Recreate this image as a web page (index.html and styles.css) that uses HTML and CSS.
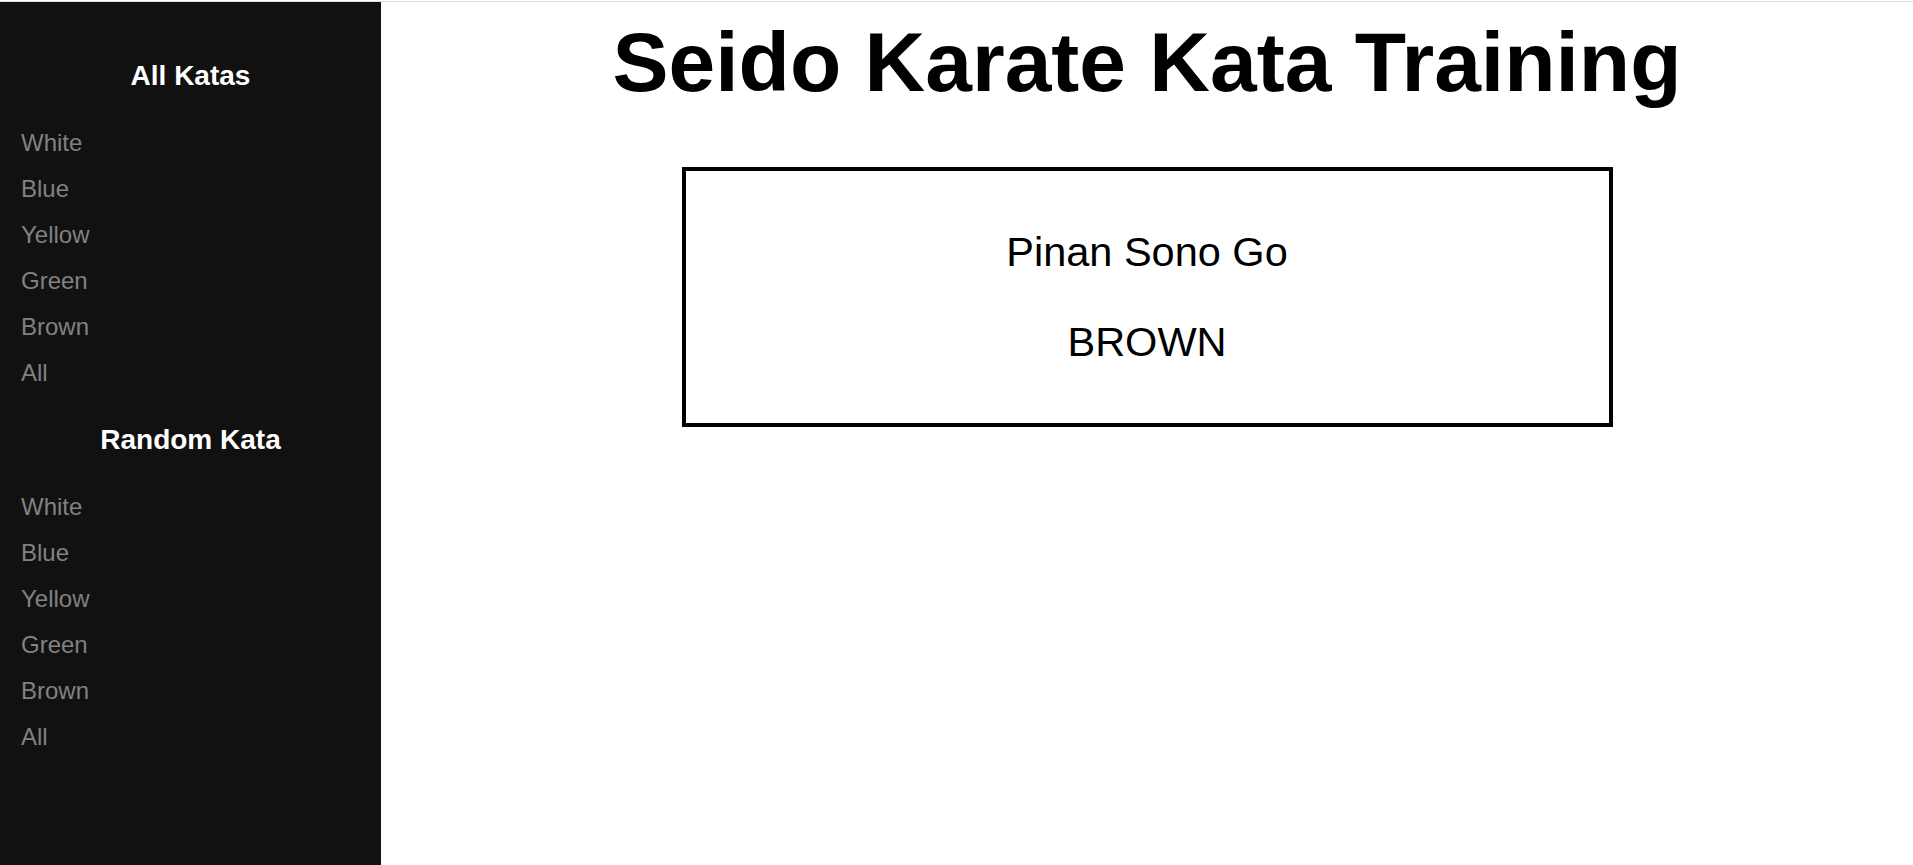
FILE: index.html
```html
<!DOCTYPE html>
<html lang="en">
<head>
<meta charset="utf-8">
<title>Seido Karate Kata Training</title>
<link rel="stylesheet" href="styles.css">
</head>
<body>
<div class="topline"></div>
<div class="layout">
  <nav class="sidenav">
    <h2 class="nav-title first">All Katas</h2>
    <a href="#">White</a>
    <a href="#">Blue</a>
    <a href="#">Yellow</a>
    <a href="#">Green</a>
    <a href="#">Brown</a>
    <a href="#">All</a>
    <h2 class="nav-title">Random Kata</h2>
    <a href="#">White</a>
    <a href="#">Blue</a>
    <a href="#">Yellow</a>
    <a href="#">Green</a>
    <a href="#">Brown</a>
    <a href="#">All</a>
  </nav>
  <main class="main">
    <h1 class="title">Seido Karate Kata Training</h1>
    <div class="kata-box">
      <p class="kata-line">Pinan Sono Go</p>
      <p class="kata-line">BROWN</p>
    </div>
  </main>
</div>
</body>
</html>
```

FILE: styles.css
```css
html, body {
  margin: 0;
  padding: 0;
  background: #fff;
  font-family: "Liberation Sans", Arial, sans-serif;
}

.topline {
  height: 1px;
  margin-top: 1px;
  background: #dddddd;
}

.layout {
  display: flex;
  height: 863px;
}

.sidenav {
  width: 381px;
  flex: 0 0 381px;
  background: #111111;
  display: flex;
  flex-direction: column;
  padding-top: 30px;
  box-sizing: border-box;
}

.nav-title {
  margin: 28px 0;
  font-size: 28px;
  line-height: 32px;
  font-weight: bold;
  color: #ffffff;
  text-align: center;
}

.sidenav a {
  display: block;
  font-size: 24px;
  line-height: 28px;
  padding: 9px 8px 9px 21px;
  color: #818181;
  text-decoration: none;
}

.main {
  flex: 1;
  display: flex;
  flex-direction: column;
  align-items: center;
}

.title {
  margin: 12px 0 0;
  font-size: 84px;
  line-height: 96px;
  font-weight: bold;
  color: #000;
}

.kata-box {
  margin-top: 57px;
  width: 931px;
  height: 260px;
  box-sizing: border-box;
  border: 4px solid #000;
  padding-top: 58px;
  display: flex;
  flex-direction: column;
  align-items: center;
  gap: 44px;
}

.kata-line {
  margin: 0;
  font-size: 41.5px;
  line-height: 46px;
  color: #000;
}
```
